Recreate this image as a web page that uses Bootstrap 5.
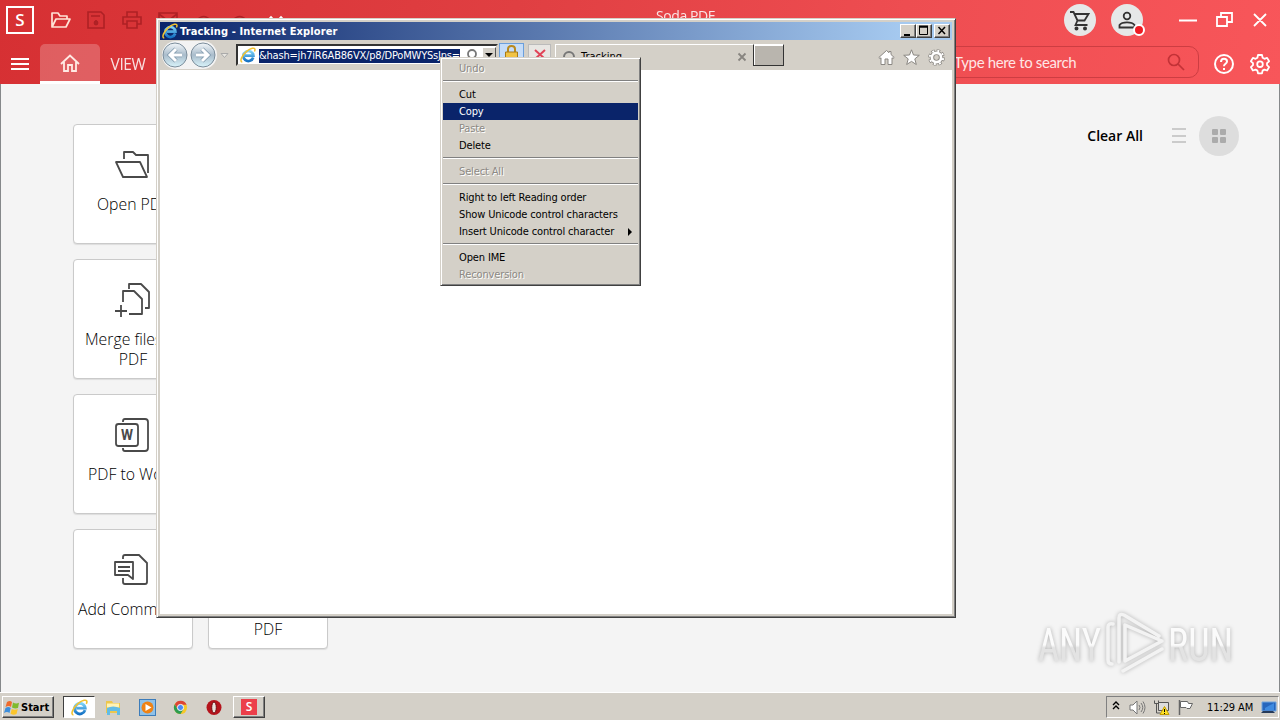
<!DOCTYPE html>
<html lang="en">
<head>
    <meta charset="UTF-8">
    <meta name="viewport" content="width=device-width, initial-scale=1.0">
    <title>Soda PDF</title>
    <link href="https://cdn.jsdelivr.net/npm/bootstrap@5.3.0/dist/css/bootstrap.min.css" rel="stylesheet">
    <style>
        body { width: 1280px; height: 720px; overflow: hidden; font-family: "DejaVu Sans Condensed", "DejaVu Sans", sans-serif; font-stretch: condensed; font-size: 11px; line-height: 17px; color: #000; background: #f4f4f4; }
        svg { display: block; flex: none; }
        .soda { height: 692px; border-left: 1px solid #85888a; border-right: 1px solid #85888a; background: #f4f4f4; font-family: "Open Sans", sans-serif; font-stretch: normal; }
        .soda-head { height: 84px; margin: 0 -1px; background: linear-gradient(100deg, #d63033, #e03f42 40%, #ee4d51 70%, #f8565a); color: #fff; }
        .title-row { height: 40px; padding: 0 11px 0 6px; }
        .logo-box { width: 28px; height: 28px; border: 2px solid #fff; font: 600 17px/24px "Open Sans", sans-serif; }
        .app-name { font: 400 14px/20px "Open Sans", sans-serif; width: 62px; height: 20px; margin-left: 370px; margin-top: -9px; white-space: nowrap; letter-spacing: -.4px; opacity: .85; }
        .round-btn { width: 32px; height: 32px; background: #e6e8e8; }
        .alert-dot { right: -2px; bottom: 0; width: 12px; height: 12px; border: 2px solid #fff; background: #ed1c24; }
        .tab-row { height: 44px; }
        .home-tab { width: 60px; height: 40px; margin-top: 4px; background: rgba(255,255,255,.22); border-bottom: 3px solid #fff; border-radius: 5px 5px 0 0; }
        .view-tab { font: 400 15.5px/40px "Open Sans", sans-serif; width: 56px; letter-spacing: -.4px; opacity: .85; padding-top: 3px; }
        .search-box { width: 299px; height: 32px; margin-left: 744px; padding: 0 13px 0 53px; border: 1px solid #cd3d42; border-radius: 10px; font: 400 15px/32px "Lato", sans-serif; letter-spacing: -.35px; color: #ffe6e6; }
        .tiles { width: 255px; gap: 15px; margin: 40px 0 0 72px; grid-template-columns: 120px 120px; }
        .tile { height: 120px; background: #fff; border: 1px solid #cacaca; border-radius: 4px; box-shadow: 0 1px 1px #ddd; padding-top: 20px; font-size: 15.8px; font-weight: 300; line-height: 20px; color: #000; text-align: center; }
        .tile svg { margin: 0 auto 9px; }
        .clear-all { margin: 32px 40px 0 0; height: 40px; gap: 26px; font: 600 14px/40px "Open Sans", sans-serif; }
        .grid-btn { width: 40px; height: 40px; background: #ddd; }
        .watermark { left: 1036px; top: 605px; filter: drop-shadow(0 0 2px rgba(0,0,0,.28)); }

        .ie-window { left: 156px; top: 18px; width: 800px; height: 600px; padding: 2px; background: #d4d0c8; border: 1px solid; border-color: #d4d0c8 #404040 #404040 #d4d0c8; box-shadow: inset 1px 1px #fff, inset -1px -1px #808080; }
        .ie-title { height: 18px; margin: 1px; padding: 0 2px; background: linear-gradient(90deg, #0a246a, #a6caf0 94%); color: #fff; font-weight: bold; font-size: 11px; letter-spacing: .13px; }
        .cap-btn { width: 16px; height: 14px; background: #d4d0c8; border: 1px solid; border-color: #fff #404040 #404040 #fff; box-shadow: inset -1px -1px #808080; }
        .ie-bar { height: 30px; margin: -1px 0 0; padding-left: 3px; background: #d4d0c8; }
        .ie-page { height: 544px; margin: 0 1px; background: #fff; }
        .nav-pill { width: 57px; height: 29px; }
        .address { width: 262px; height: 22px; margin: 4px 0 0 14px; padding: 0 0 0 2px; background: #fff; border: 2px solid; border-color: #333 #d4d0c8 #d4d0c8 #333; }
        .url-text { width: 201px; height: 14px; margin: 1px 0 0 3px; line-height: 14px; background: #0a246a; color: #fff; white-space: nowrap; letter-spacing: -.2px; }
        .drop-btn { width: 14px; height: 17px; background: #d4d0c8; border: 1px solid; border-color: #fff #555 #555 #fff; }
        .lock-btn { width: 25px; height: 24px; margin: 3px 0 0 1px; background: #c5dcf8; border: 1px solid #6b9fdc; }
        .stop-btn { width: 23px; height: 22px; margin: 4px 0 0 4px; background: #e8e6e3; border: 1px solid #bbb; }
        .page-tab { width: 198px; height: 24px; margin: 4px 0 0 4px; padding: 0 6px 0 7px; border: 1px solid #fff; border-width: 1px 0 0 1px; line-height: 20px; }
        .new-tab { width: 31px; height: 22px; margin-top: 4px; background: #b9b5ae; border: 1px solid #333; border-top-color: #fff; box-shadow: inset 1px 1px #fff; }
        .ie-tools { margin: 9px 8px 0 auto; gap: 8px; }

        .ctx-menu { left: 440px; top: 57px; width: 201px; height: 229px; padding: 2px; background: #d4d0c8; border: 1px solid; border-color: #d4d0c8 #404040 #404040 #d4d0c8; box-shadow: inset 1px 1px #fff, inset -1px -1px #808080; }
        .ctx-menu div { height: 17px; padding-left: 16px; line-height: 17px; white-space: nowrap; letter-spacing: -.14px; }
        .ctx-menu .ctx-off { color: #8c8984; text-shadow: 1px 1px #fff; }
        .ctx-menu .ctx-on { background: #0a246a; color: #fff; }
        .ctx-menu hr { height: 2px; margin: 3px 0 4px; border: 0; border-top: 1px solid #808080; border-bottom: 1px solid #fff; opacity: 1; }

        .task-bar { height: 28px; padding: 2px 1px 0 2px; background: #d4d0c8; border-top: 1px solid #fff; }
        .start-btn { width: 52px; height: 22px; margin-top: 1px; padding-left: 1px; border: 1px solid; border-color: #fff #404040 #404040 #fff; box-shadow: inset -1px -1px #808080; font-weight: bold; }
        .ie-task { width: 32px; height: 22px; margin: 1px 0 0 9px; background: #fff; border: 1px solid; border-color: #404040 #fff #fff #404040; }
        .task-icons { width: 138px; height: 24px; gap: 17px; padding-left: 10px; }
        .soda-task { width: 32px; height: 22px; margin-top: 1px; border: 1px solid; border-color: #fff #404040 #404040 #fff; box-shadow: inset -1px -1px #808080; }
        .soda-mark { width: 16px; height: 16px; background: #ec3f4a; color: #fff; font: 600 12px/16px "Open Sans", sans-serif; }
        .tray { width: 173px; height: 22px; padding-left: 5px; border: 1px solid; border-color: #808080 #fff #fff #808080; margin-top: 1px; }
        .clock { width: 47px; margin-left: 13px; white-space: nowrap; letter-spacing: -.1px; }
    </style>
</head>
<body>
    <!-- Shared shapes -->
    <svg width="0" height="0" class="position-absolute">
        <defs>
            <linearGradient id="eBlue" x1="0" y1="0" x2="0" y2="1"><stop offset="0" stop-color="#7fd4f7"/><stop offset="1" stop-color="#1673c5"/></linearGradient>
            <linearGradient id="ball" x1="0" y1="0" x2="0" y2="1"><stop offset="0" stop-color="#f4f8fb"/><stop offset=".5" stop-color="#a9bccb"/><stop offset="1" stop-color="#d9f4fb"/></linearGradient>
            <linearGradient id="mk" x1="0" y1="0" x2="0" y2="1"><stop offset=".5" stop-color="#fbfbfb"/><stop offset=".55" stop-color="#e3e3e3"/></linearGradient>
            <symbol id="ie" viewBox="0 0 16 16">
                <path d="M13.2 10.5A5 5 0 1 1 13.4 8.6H5" fill="none" stroke="url(#eBlue)" stroke-width="2.7"/>
                <path d="M2.3 15C-.8 14.7 1.8 8.5 6.3 4.6S15 .2 15 2.6c0 .7-.3 1.3-.6 1.9" fill="none" stroke="#f2c230" stroke-width="1.5"/>
            </symbol>
        </defs>
    </svg>

    <main class="soda">
        <header class="soda-head">
            <div class="title-row d-flex align-items-center">
                <div class="logo-box text-center">S</div>
                <svg width="22" height="20" viewBox="0 0 22 20" class="ms-3" fill="none" stroke="#ffe3d6" stroke-width="1.7" stroke-linejoin="round"><path d="M2 17V3h6l2 3h7v3M2 17 6 9h14l-4 8z"/></svg>
                <svg width="18" height="18" viewBox="0 0 18 18" style="margin-left:15px" fill="none" stroke="#ae2125" stroke-width="1.6"><path d="M1 1h13l3 3v13H1zM4 5h9M9 9v4"/><circle cx="9" cy="12" r="1.6"/></svg>
                <svg width="20" height="18" viewBox="0 0 20 18" style="margin-left:17px" fill="none" stroke="#ae2125" stroke-width="1.6"><path d="M5 6V1h10v5M5 13H1V6h18v7h-4M5 10h10v7H5z"/></svg>
                <svg width="128" height="18" viewBox="0 0 128 18" style="margin-left:16px" fill="none" stroke="#ae2125" stroke-width="1.6"><path d="M1 2h18v14H1zM1 3l9 7 9-7M39 9q7-7 13 0M75 9q7-7 13 0"/><path d="m110 9 3-3 3 3m4 0 3-3 3 3" stroke="#fff"/></svg>
                <div class="app-name">Soda PDF</div>
                <div class="round-btn rounded-circle d-flex align-items-center justify-content-center" style="margin-left:346px">
                    <svg width="20" height="21" viewBox="0 0 20 21" fill="none" stroke="#333" stroke-width="1.8"><path d="M0 2h3.5l4 8.5h7L18.5 4H4.5M7.5 10.5 5.5 15h12"/><circle cx="6.5" cy="18.5" r="1.1" fill="#333"/><circle cx="15" cy="18.5" r="1.1" fill="#333"/></svg>
                </div>
                <div class="round-btn rounded-circle position-relative d-flex align-items-center justify-content-center" style="margin-left:15px">
                    <svg width="18" height="18" viewBox="0 0 18 18" fill="none" stroke="#333" stroke-width="1.8"><circle cx="9" cy="5" r="3.3"/><path d="M1.5 16.5V14C4 10.6 14 10.6 16.5 14v2.5z"/></svg>
                    <span class="alert-dot position-absolute rounded-circle"></span>
                </div>
                <svg width="90" height="20" viewBox="0 0 90 20" class="ms-auto" fill="none" stroke="#fff" stroke-width="1.8"><path d="M0 10.5h18M38 7h10v9H38zM42 7V3h11v9h-5M75 4l12 12M87 4 75 16"/></svg>
            </div>
            <div class="tab-row d-flex align-items-center">
                <svg width="40" height="44" viewBox="0 0 40 44" stroke="#fff" stroke-width="2"><path d="M11 19h18M11 24h18M11 29h18"/></svg>
                <div class="home-tab d-flex justify-content-center align-items-center"><svg width="20" height="20" viewBox="0 0 20 20" fill="none" stroke="#ffeae4" stroke-width="1.8"><path d="M1 11 10 2.5l9 8.500M4 9v9h4v-6h4v6h4V9"/></svg></div>
                <div class="view-tab text-center">VIEW</div>
                <div class="search-box d-flex align-items-center justify-content-between"><span>Type here to search</span>
                    <svg width="18" height="18" viewBox="0 0 18 18" fill="none" stroke="#c33237" stroke-width="1.7"><circle cx="7" cy="7" r="5.5"/><path d="m11 11 6 6"/></svg>
                </div>
                <svg width="22" height="22" viewBox="0 0 22 22" style="margin-left:14px;margin-top:4px" fill="none" stroke="#fff" stroke-width="2"><circle cx="11" cy="11" r="9"/><path d="M8 9c0-4.5 6-4 6-.5 0 2.3-3 2.3-3 4.7M11 15v2"/></svg>
                <svg width="22" height="22" viewBox="0 0 22 22" style="margin-left:14px;margin-top:4px" fill="none" stroke="#fff" stroke-width="1.8" stroke-linejoin="round"><path d="M9 2h4l.6 2.8 1.8 1 2.7-.9 2 3.4-2.1 1.9v2l2.1 1.9-2 3.4-2.7-.9-1.8 1L13 20.3H9l-.6-2.7-1.8-1-2.7.9-2-3.4L4 12.2v-2L1.9 8.3l2-3.4 2.7.9 1.8-1z"/><circle cx="11" cy="11.2" r="2.8"/></svg>
            </div>
        </header>

        <div class="d-flex justify-content-between align-items-start">
            <section class="tiles d-grid">
                <div class="tile"><svg width="40" height="40" viewBox="0 0 40 40" fill="none" stroke="#4a4a4a" stroke-width="1.8" stroke-linejoin="round"><path d="M11 14V7h9l3 3h12v18M3 17h24l7 15H10z"/></svg>Open PDF</div>
                <div class="tile"></div>
                <div class="tile"><svg width="40" height="40" viewBox="0 0 40 40" fill="none" stroke="#4a4a4a" stroke-width="1.8" stroke-linejoin="round"><path d="M10 22V11h11l8 8v15H16M16 9V4h12l8 8v16h-4M2 31h12M8 25v12"/></svg>Merge files to PDF</div>
                <div class="tile"></div>
                <div class="tile"><svg width="40" height="40" viewBox="0 0 40 40" fill="none" stroke="#4a4a4a" stroke-width="1.8"><path d="M10 7V6q0-2 2-2h20q3 0 3 3v26q0 3-3 3H12q-2 0-2-2v-1"/><rect x="3" y="9" width="22" height="22" rx="2.5"/><text x="8" y="25" font-family="Roboto" font-size="14" textLength="12" lengthAdjust="spacingAndGlyphs" font-weight="700" fill="#4a4a4a" stroke="none">W</text></svg>PDF to Word</div>
                <div class="tile"></div>
                <div class="tile"><svg width="40" height="40" viewBox="0 0 40 40" fill="none" stroke="#4a4a4a" stroke-width="1.8" stroke-linejoin="round"><path d="M10 9V7q0-2 2-2h14l8 8v19q0 2-2 2H12q-2 0-2-2v-4M2 12h18v17l-5-4H2zM5 17h12M5 21h12"/></svg>Add Comments</div>
                <div class="tile"><svg width="40" height="40" viewBox="0 0 40 40"></svg><br>PDF</div>
            </section>
            <div class="clear-all d-flex align-items-center">
                <span>Clear All</span>
                <div class="d-flex align-items-center gap-2">
                    <svg width="20" height="20" viewBox="0 0 20 20" stroke="#bdbdbd" stroke-width="1.6" style="margin-right:2px"><path d="M3 3h14M3 10h14M3 16h14"/></svg>
                    <div class="grid-btn rounded-circle d-flex align-items-center justify-content-center">
                        <svg width="14" height="14" viewBox="0 0 14 14" fill="#ababab"><rect width="6" height="6" rx="1"/><rect x="8" width="6" height="6" rx="1"/><rect y="8" width="6" height="6" rx="1"/><rect x="8" y="8" width="6" height="6" rx="1"/></svg>
                    </div>
                </div>
            </div>
        </div>
    </main>

    <footer class="task-bar d-flex">
        <div class="start-btn d-flex align-items-center">
            <svg width="17" height="17" viewBox="0 0 17 17"><path d="M3 3q3-2 5 0L7 8q-2-2-5.500 0z" fill="#ef6b2c"/><path d="M9 3.500q3 2 6 .3L14 9q-3 1-6-.6z" fill="#7fba2d"/><path d="M1.500 9q3-2 5.200 0L5.500 14Q3 12 0 14z" fill="#3c8edc"/><path d="M7.800 10q3 1.500 6 0l-1.300 5q-3 1.500-6-.3z" fill="#fbc52c"/></svg>
            <span>Start</span>
        </div>
        <div class="ie-task d-flex align-items-center justify-content-center"><svg width="17" height="17"><use href="#ie"/></svg></div>
        <div class="task-icons d-flex align-items-center">
            <svg width="17" height="17" viewBox="0 0 17 17"><path d="M1 2h6l1 2h7v10H1z" fill="#edc74e"/><path d="M2 4.500h12v4H2z" fill="#fff3b6"/><path d="M2 9q6-3 13 0v7h-3v-4H5v4H2z" fill="#62bce6"/></svg>
            <svg width="17" height="17" viewBox="0 0 17 17"><rect x=".5" y=".5" width="16" height="16" fill="#8fc1e8" stroke="#3c7cba"/><circle cx="8.500" cy="8.500" r="6" fill="#ef8214"/><path d="m6.500 5 6 3.500-6 3.500z" fill="#fff"/></svg>
            <svg width="15" height="15" viewBox="0 0 16 16"><circle cx="8" cy="8" r="7" fill="#f6c829"/><path d="M8 8V5h6.500A7 7 0 0 0 2 4.500L5 10z" fill="#dd4436"/><path d="M1.900 4.500A7 7 0 0 0 8 15l3-5-3-1-3 1z" fill="#2d9c50"/><circle cx="8" cy="8" r="3.300" fill="#4a8af4" stroke="#fff"/></svg>
            <svg width="17" height="17" viewBox="0 0 17 17"><circle cx="9" cy="8.500" r="7.500" fill="#b5141c"/><ellipse cx="9" cy="8.500" rx="2.300" ry="5.500" fill="#e8e2dc" stroke="#6c080d"/></svg>
        </div>
        <div class="soda-task d-flex align-items-center justify-content-center"><span class="soda-mark text-center">S</span></div>
        <div class="tray ms-auto d-flex align-items-center">
            <svg width="8" height="14" viewBox="0 0 8 14" fill="none" stroke="#000" stroke-width="1.400"><path d="m1 5 3-3 3 3M1 9l3-3 3 3"/></svg>
            <svg width="17" height="17" viewBox="0 0 17 17" style="margin-left:9px" fill="#fff" stroke="#777"><path d="M1 6h3l4-4v13l-4-4H1z"/><path d="M10 6q2 2.500 0 5M12 4q3.500 4.500 0 9M14 2.500q4 6 0 12" fill="none"/></svg>
            <svg width="17" height="17" viewBox="0 0 17 17" style="margin-left:7px" fill="#ddd" stroke="#555"><path d="M5.500 3.500h10v8h-10z"/><path d="M1.500 1.500v3h4v-3M3.500 5v9h4" fill="none"/><path d="m11.500 7.500 4.500 8H7z" fill="#ffe324" stroke="#c29b00"/><path d="M11.500 10v3m0 1v1" stroke="#000"/></svg>
            <svg width="16" height="16" viewBox="0 0 16 16" style="margin-left:8px" fill="#fff" stroke="#666"><path d="M1.500 1v15" stroke-width="1.500"/><path d="M2.500 2.500h7l1 2h4l-2.500 5H9l-1-1H2.500z"/></svg>
            <span class="clock">11:29 AM</span>
            <svg width="16" height="16" viewBox="0 0 16 16" style="margin-left:7px"><path d="M1 3h14v9H1z" fill="#2666bd" stroke="#70a5df"/><path d="M2 12h10l2 2H0z" fill="#263a59"/><path d="m4 9 9-5v7H4z" fill="#3f8be0"/></svg>
        </div>
    </footer>

    <!-- Internet Explorer window -->
    <section class="ie-window position-absolute">
        <div class="ie-title d-flex align-items-center">
            <svg width="16" height="16"><use href="#ie"/></svg>
            <span class="me-auto" style="margin-left:2px">Tracking - Internet Explorer</span>
            <div class="cap-btn"><svg width="14" height="12"><path d="M3 9h6v2H3z"/></svg></div>
            <div class="cap-btn"><svg width="14" height="12" fill="none" stroke="#000"><path d="M2.500 2v7.500h8V2M2 2h9"/><path d="M2 1.500h9" stroke-width="2"/></svg></div>
            <div class="cap-btn" style="margin-left:2px"><svg width="14" height="12" stroke="#000" stroke-width="1.500"><path d="m3.500 2 6.500 7M10 2 3.500 9"/></svg></div>
        </div>
        <div class="ie-bar d-flex align-items-start">
            <svg class="nav-pill" width="57" height="29" viewBox="0 0 57 29">
                <rect width="55" height="28" rx="14" y="1" fill="#f3f3f3"/>
                <g fill="url(#ball)" stroke="#7b8d9b"><circle cx="13" cy="15" r="12"/><circle cx="41" cy="15" r="12"/></g>
                <path d="M20 15H8m6-6-6 6 6 6M34 15h12m-6-6 6 6-6 6" fill="none" stroke="#7f99ac" stroke-width="4.500"/>
                <path d="M20 15H8m6-6-6 6 6 6M34 15h12m-6-6 6 6-6 6" fill="none" stroke="#fff" stroke-width="3"/>
            </svg>
            <svg width="9" height="8" style="margin:12px -7px 0 1px" viewBox="0 0 9 8"><path d="M1 1.500h7L4.500 5.500z" fill="#e9e7e2" stroke="#aaa"/></svg>
            <div class="address d-flex align-items-center">
                <svg width="16" height="16"><use href="#ie"/></svg>
                <div class="url-text">&amp;hash=jh7iR6AB86VX/p8/DPoMWYSsJns=</div>
                <svg width="16" height="16" viewBox="0 0 16 16" class="ms-auto" fill="none" stroke="#777" stroke-width="1.800"><circle cx="9" cy="7" r="4"/><path d="m6 10-3 4"/></svg>
                <div class="drop-btn ms-auto"><svg width="12" height="15"><path d="M2 5h8L6 9z"/></svg></div>
            </div>
            <div class="lock-btn d-flex justify-content-center"><svg width="15" height="18" viewBox="0 0 15 18"><path d="M4 9V5q0-3 3.500-3T11 5v4" fill="none" stroke="#b9891e" stroke-width="2"/><path d="M1.500 8h12v8h-12z" fill="#f1c344" stroke="#a77a18"/></svg></div>
            <div class="stop-btn d-flex justify-content-center"><svg width="12" height="16" viewBox="0 0 12 16" stroke="#e04357" stroke-width="2"><path d="m1 5 10 9M11 5 1 14"/></svg></div>
            <div class="page-tab d-flex align-items-center">
                <svg width="12" height="12" fill="none" stroke="#777" stroke-width="2"><circle cx="6" cy="6" r="5"/></svg>
                <span class="me-auto" style="margin-left:6px">Tracking</span>
                <svg width="10" height="10" stroke="#888580" stroke-width="1.800"><path d="m1.500 1.500 7 7m0-7-7 7"/></svg>
            </div>
            <div class="new-tab"></div>
            <div class="ie-tools d-flex">
                <svg width="17" height="17" viewBox="0 0 17 17" fill="#fff" stroke="#8a8782"><path d="m.8 8.500 7.700-7 2.500 2.200V2.500h2v3l3.200 3-1.200 1-1-.7V15.500h-4V10h-3v5.500H3V8.800l-1 .7z"/></svg>
                <svg width="17" height="17" viewBox="0 0 17 17" fill="#fff" stroke="#8a8782"><path d="m8.500.8 2 5.200 5.800.3-4.500 3.600 1.500 5.600-4.800-3.100-4.800 3.100 1.500-5.600L.7 6.300 6.500 6z"/></svg>
                <svg width="17" height="17" viewBox="0 0 17 17" fill="none"><circle cx="8.500" cy="8.500" r="6.700" stroke="#8a8782" stroke-width="3.300" stroke-dasharray="3.300 1.962"/><circle cx="8.500" cy="8.500" r="4.600" stroke="#8a8782" stroke-width="4.400"/><circle cx="8.500" cy="8.500" r="6.700" stroke="#fff" stroke-width="2" stroke-dasharray="2 3.262" stroke-dashoffset="-.65"/><circle cx="8.500" cy="8.500" r="4.600" stroke="#fff" stroke-width="2.600"/></svg>
            </div>
        </div>
        <div class="ie-page"></div>
    </section>

    <!-- Address bar context menu -->
    <section class="ctx-menu position-absolute">
        <div class="ctx-off">Undo</div>
        <hr>
        <div>Cut</div>
        <div class="ctx-on">Copy</div>
        <div class="ctx-off">Paste</div>
        <div>Delete</div>
        <hr>
        <div class="ctx-off">Select All</div>
        <hr>
        <div>Right to left Reading order</div>
        <div>Show Unicode control characters</div>
        <div class="d-flex justify-content-between align-items-center">Insert Unicode control character<svg width="5" height="8" style="margin-right:5px"><path d="M0 0v8l4-4z"/></svg></div>
        <hr>
        <div>Open IME</div>
        <div class="ctx-off">Reconversion</div>
    </section>

    <!-- ANY.RUN mark in the corner -->
    <svg class="watermark position-absolute" width="210" height="80" viewBox="0 0 210 80" fill="url(#mk)">
        <text x="2" y="56" font-family="Roboto" font-size="46" textLength="63" lengthAdjust="spacingAndGlyphs">ANY</text>
        <text x="132" y="56" font-family="Roboto" font-size="46" textLength="65" lengthAdjust="spacingAndGlyphs">RUN</text>
        <path d="M77 19q-5-1-5 3v33q0 4 4 4M83 57V13q0-5 5-3l35 21M89 20v36l37-20zM87 66l39-22" fill="none" stroke="#f3f3f3" stroke-width="3.500" stroke-linecap="round" stroke-linejoin="round"/>
    </svg>

    <script src="https://cdn.jsdelivr.net/npm/bootstrap@5.3.0/dist/js/bootstrap.bundle.min.js"></script>
</body>
</html>
